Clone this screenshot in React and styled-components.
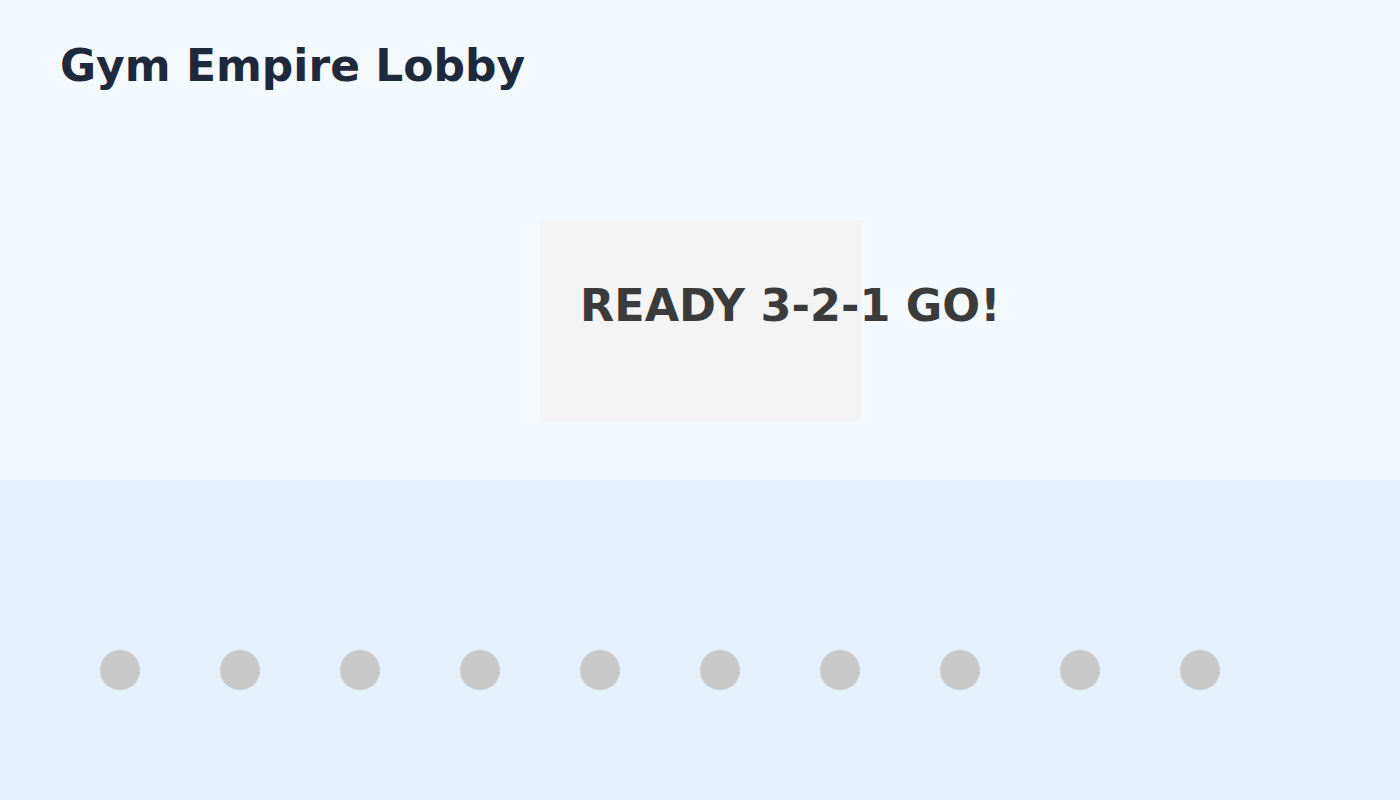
import React from 'react';
import styled, { createGlobalStyle } from 'styled-components';

const GlobalStyle = createGlobalStyle`
    html, body {
        margin: 0;
        padding: 0;
        background: #e6f0fa;
        font-family: "DejaVu Sans", "Liberation Sans", sans-serif;
    }
`

export default function App() {
    const seats = Array.from({ length: 10 });

    return(
        <>
        <GlobalStyle />
        <Lobby>
            <TopArea>
                <Title>Gym Empire Lobby</Title>
                <CountdownBox>
                    <CountdownText>READY 3-2-1 GO!</CountdownText>
                </CountdownBox>
            </TopArea>
            <SeatRow>
                { seats.map((_, i) => <Seat key={i} />) }
            </SeatRow>
        </Lobby>
        </>
    )
}

const Lobby = styled.div`
    display: flex;
    flex-direction: column;
    width: 1400px;
    height: 800px;
    overflow: hidden;
`

const TopArea = styled.div`
    height: 480px;
    box-sizing: border-box;
    padding: 40px 60px 0;
    background: #f4f9fe;
`

const Title = styled.h1`
    margin: 0;
    font-size: 44px;
    line-height: 51px;
    font-weight: bold;
    color: #1e293b;
`

const CountdownBox = styled.div`
    width: 321px;
    height: 201px;
    box-sizing: border-box;
    margin: 129px 0 0 480px;
    padding: 60px 40px 0;
    background: #f4f4f4;
`

const CountdownText = styled.div`
    font-size: 44.5px;
    line-height: 51px;
    font-weight: bold;
    color: #3b3b3b;
    white-space: nowrap;
`

const SeatRow = styled.div`
    flex: 1;
    display: flex;
    gap: 80px;
    padding: 170px 0 0 100px;
    background: #e6f0fa;
`

const Seat = styled.div`
    width: 40px;
    height: 40px;
    border-radius: 50%;
    background: #c8c8c8;
`
